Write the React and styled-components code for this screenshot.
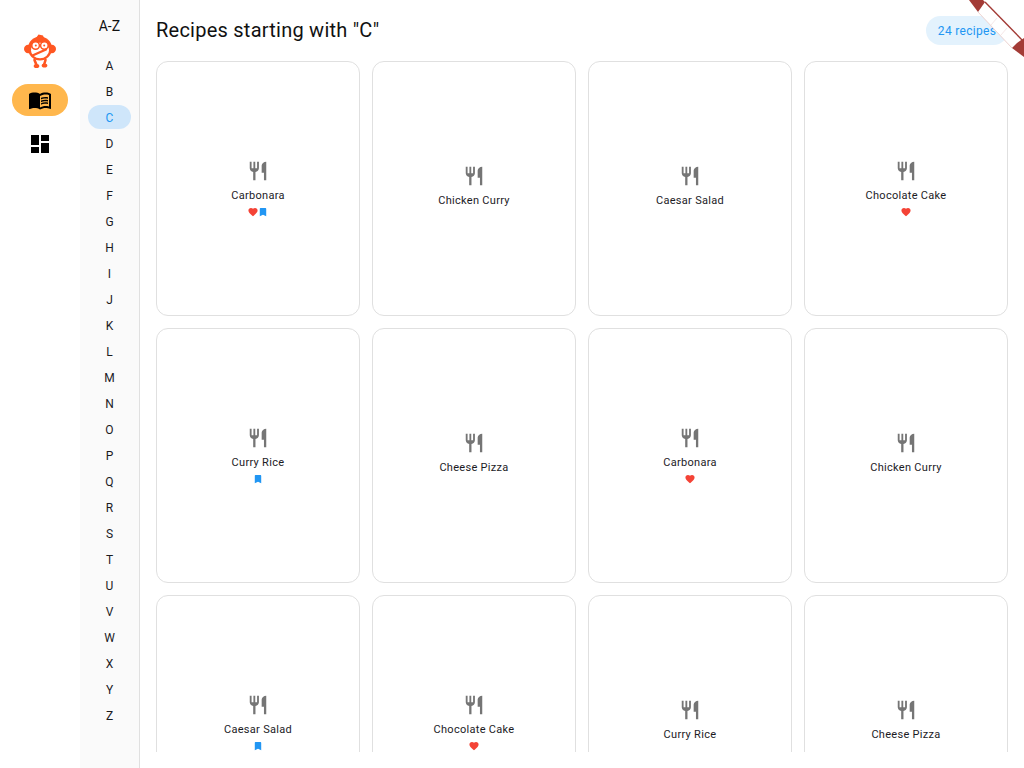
import React from "react";
import styled, { createGlobalStyle } from "styled-components";
import { MdMenuBook, MdDashboard, MdRestaurant, MdFavorite, MdBookmark } from "react-icons/md";

const Global = createGlobalStyle`
  html, body { margin: 0; padding: 0; background: #fff; }
  body { font-family: Roboto, "Liberation Sans", sans-serif; color: #1c1b1f; }
  * { box-sizing: border-box; }
`;

const Page = styled.div`
  position: relative;
  display: flex;
  width: 1024px;
  height: 768px;
  overflow: hidden;
  background: #fff;
`;

const Rail = styled.nav`
  width: 80px;
  flex: none;
  display: flex;
  flex-direction: column;
  align-items: center;
  padding-top: 34px;
`;

const Logo = styled.svg`
  width: 32px;
  height: 34px;
  display: block;
`;

const RailButton = styled.button`
  width: 56px;
  height: 32px;
  margin-top: ${(p) => p.$mt}px;
  border: 0;
  padding: 0;
  border-radius: 16px;
  background: ${(p) => (p.$active ? "#ffb74d" : "transparent")};
  color: #000;
  display: flex;
  align-items: center;
  justify-content: center;
  font-size: 24px;
`;

const AlphaColumn = styled.aside`
  width: 60px;
  flex: none;
  background: #fafafa;
  border-right: 1px solid #e0e0e0;
  display: flex;
  flex-direction: column;
  align-items: center;
`;

const AlphaTitle = styled.div`
  height: 53px;
  padding-top: 17px;
  font-size: 14px;
  line-height: 18px;
  color: #111;
  letter-spacing: 0.1px;
`;

const Letter = styled.div`
  width: 43px;
  height: 24px;
  margin-bottom: 2px;
  padding-top: 1px;
  border-radius: 12px;
  display: flex;
  align-items: center;
  justify-content: center;
  font-size: 12px;
  background: ${(p) => (p.$active ? "#cfe6fa" : "transparent")};
  color: ${(p) => (p.$active ? "#2196f3" : "#1c1b1f")};
`;

const Main = styled.main`
  flex: 1;
  min-width: 0;
  height: 768px;
  padding: 16px;
  display: flex;
  flex-direction: column;
  gap: 16px;
`;

const Header = styled.header`
  display: flex;
  align-items: center;
  justify-content: space-between;
  height: 29px;
  flex: none;
`;

const Title = styled.h1`
  margin: 0;
  font-size: 20px;
  font-weight: 400;
  line-height: 29px;
  letter-spacing: 0.24px;
  color: #111;
`;

const CountPill = styled.div`
  height: 29px;
  width: 82px;
  border-radius: 15px;
  background: #e3f2fd;
  color: #2196f3;
  font-size: 12px;
  letter-spacing: 0.3px;
  display: flex;
  align-items: center;
  justify-content: center;
`;

const GridViewport = styled.div`
  flex: 1;
  min-height: 0;
  overflow: hidden;
`;

const Grid = styled.div`
  display: grid;
  grid-template-columns: repeat(4, 1fr);
  gap: 12px;
`;

const Card = styled.article`
  aspect-ratio: 0.8;
  border: 1px solid #e0e0e0;
  border-radius: 12px;
  background: #fff;
  display: flex;
  flex-direction: column;
  align-items: center;
  justify-content: center;
`;

const CardIcon = styled.div`
  color: #757575;
  font-size: 22px;
  height: 24px;
  padding-top: 1px;
  line-height: 0;
`;

const CardName = styled.div`
  margin-top: 5px;
  height: 15px;
  font-size: 11px;
  line-height: 16px;
  letter-spacing: 0.3px;
  color: #1c1b1f;
`;

const Badges = styled.div`
  min-height: 5px;
  display: flex;
  justify-content: center;
  &:not(:empty) { padding-top: 3px; }
`;

const HeartBadge = styled(MdFavorite)`
  color: #f44336;
  width: 12px;
  height: 12px;
  padding: 0.5px;
  display: block;
`;

const BookmarkBadge = styled(MdBookmark)`
  color: #2196f3;
  width: 12px;
  height: 12px;
  padding: 0.5px;
  display: block;
  margin-left: ${(p) => (p.$after ? "-2px" : "0")};
`;

const Ribbon = styled.svg`
  position: absolute;
  top: 0;
  right: 0;
  width: 60px;
  height: 60px;
`;

const letters = "ABCDEFGHIJKLMNOPQRSTUVWXYZ".split("");

const recipes = [
  { name: "Carbonara", heart: true, mark: true },
  { name: "Chicken Curry" },
  { name: "Caesar Salad" },
  { name: "Chocolate Cake", heart: true },
  { name: "Curry Rice", mark: true },
  { name: "Cheese Pizza" },
  { name: "Carbonara", heart: true },
  { name: "Chicken Curry" },
  { name: "Caesar Salad", mark: true },
  { name: "Chocolate Cake", heart: true },
  { name: "Curry Rice" },
  { name: "Cheese Pizza" },
];

const MonkeyLogo = () => (
  <Logo viewBox="0 0 32 34" aria-label="logo">
    <path d="M12 4 L14.5 0.5 L19 1.5 L20 4z" fill="#ff5722" />
    <circle cx="4.2" cy="15" r="4.2" fill="#ff5722" />
    <circle cx="27.8" cy="15" r="4.2" fill="#ff5722" />
    <circle cx="16" cy="14.5" r="12" fill="#ff5722" />
    <ellipse cx="16" cy="16.5" rx="9" ry="7.8" fill="#fff" />
    <circle cx="11.6" cy="11.5" r="3.8" fill="#fff" stroke="#ff5722" strokeWidth="1.5" />
    <circle cx="20.4" cy="11.5" r="3.8" fill="#fff" stroke="#ff5722" strokeWidth="1.5" />
    <circle cx="11.8" cy="11.5" r="1" fill="#ff5722" />
    <circle cx="20.2" cy="11.5" r="1" fill="#ff5722" />
    <path d="M8.5 21.5 L22 15.5" stroke="#ff5722" strokeWidth="2.4" strokeLinecap="round" />
    <path d="M10.5 26 L12.5 31 M21.5 26 L20 31" stroke="#ff5722" strokeWidth="2.6" strokeLinecap="round" />
    <ellipse cx="12.5" cy="32" rx="2.8" ry="2" fill="#ff5722" />
    <ellipse cx="20.5" cy="31.5" rx="2.8" ry="2" fill="#ff5722" />
  </Logo>
);

export default function App() {
  return (
    <Page>
      <Global />
      <Rail>
        <MonkeyLogo />
        <RailButton $active $mt={16}>
          <MdMenuBook />
        </RailButton>
        <RailButton $mt={12}>
          <MdDashboard />
        </RailButton>
      </Rail>
      <AlphaColumn>
        <AlphaTitle>A-Z</AlphaTitle>
        {letters.map((l) => (
          <Letter key={l} $active={l === "C"}>{l}</Letter>
        ))}
      </AlphaColumn>
      <Main>
        <Header>
          <Title>Recipes starting with "C"</Title>
          <CountPill>24 recipes</CountPill>
        </Header>
        <GridViewport>
          <Grid>
            {recipes.map((r, i) => (
              <Card key={i}>
                <CardIcon><MdRestaurant /></CardIcon>
                <CardName>{r.name}</CardName>
                <Badges>
                  {r.heart && <HeartBadge />}
                  {r.mark && <BookmarkBadge $after={r.heart} />}
                </Badges>
              </Card>
            ))}
          </Grid>
        </GridViewport>
      </Main>
      <Ribbon viewBox="0 0 60 60">
        <polygon points="14,12 21,2 60,42 60,60 48,48" fill="#fff" />
        <path d="M21 2 L60 42" stroke="#a33b36" strokeWidth="1.4" fill="none" />
        <path d="M14 12 L48 48" stroke="#ecd2d0" strokeWidth="1" fill="none" />
        <path d="M27 25 L33 18 M37 35 L43 28" stroke="#f2e0e0" strokeWidth="0.8" fill="none" />
        <polygon points="5,0 19,0 21,2 14,12" fill="#a33b36" />
        <polygon points="48,48 53,43 60,38 60,57" fill="#a33b36" />
      </Ribbon>
    </Page>
  );
}
